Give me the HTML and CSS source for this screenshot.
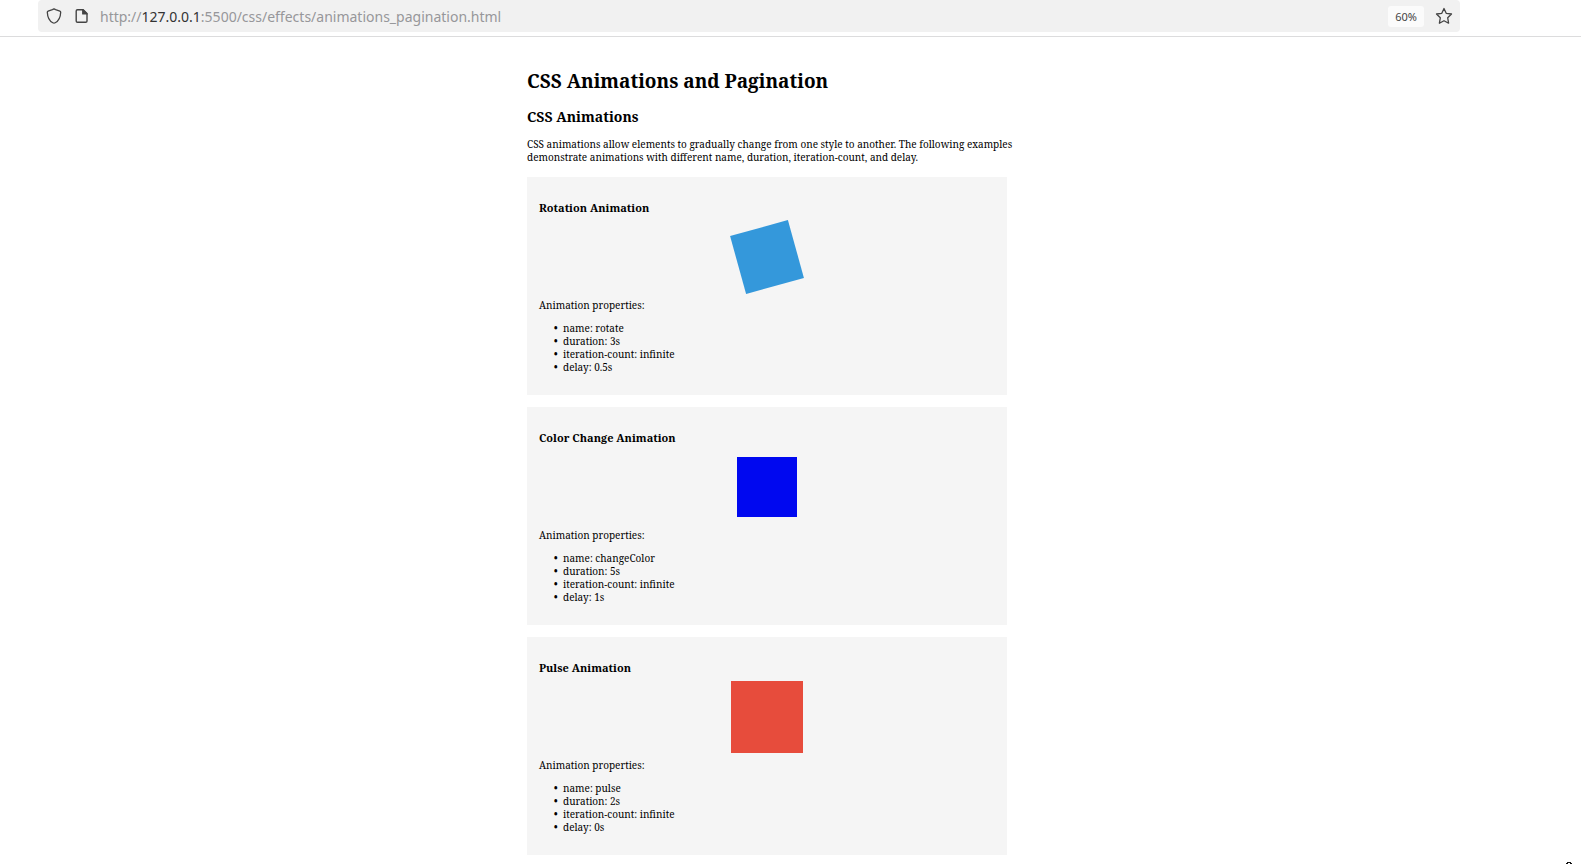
FILE: index.html
```
<!DOCTYPE html>
<html lang="en">
<head>
<meta charset="utf-8">
<title>CSS Animations and Pagination</title>
<link rel="stylesheet" href="styles.css">
</head>
<body>
<header class="toolbar">
  <div class="urlbar">
    <button class="icon-button" type="button" aria-label="Tracking protection">
      <svg width="16" height="16" viewBox="0 0 16 16" fill="none" stroke="currentColor" stroke-width="1.3" stroke-linejoin="round"><path d="M8 .8 9.6 1.6 13.9 3.1Q14.7 3.4 14.7 4.2C14.5 9 12.8 12.8 9.2 14.8Q8 15.5 6.8 14.8C3.2 12.8 1.5 9 1.3 4.2Q1.3 3.4 2.1 3.1L6.4 1.6Z"/></svg>
    </button>
    <button class="icon-button" type="button" aria-label="Site information">
      <svg width="16" height="16" viewBox="0 0 16 16" fill="none" stroke="currentColor" stroke-width="1.4" stroke-linejoin="round"><path d="M4.5 1.7H10.2L14 5.5V13Q14 14.3 12.7 14.3H4.5Q3.2 14.3 3.2 13V3Q3.2 1.7 4.5 1.7Z"/><path d="M9.8 1.7V5.9H14Z" fill="currentColor"/></svg>
    </button>
    <div class="address" role="textbox" aria-label="Address" contenteditable="true" spellcheck="false">http://<span class="host">127.0.0.1</span>:5500/css/effects/animations_pagination.html</div>
    <button class="zoom" type="button">60%</button>
    <button class="icon-button" type="button" aria-label="Bookmark this page">
      <svg width="18" height="18" viewBox="0 0 18 18" fill="none" stroke="currentColor" stroke-width="1.3" stroke-linejoin="round"><path d="M9 1.5 11.2 6.3 16.5 7 12.7 10.8 13.6 16.2 9 13.7 4.4 16.2 5.3 10.8 1.5 7 6.8 6.3Z"/></svg>
    </button>
  </div>
</header>
<main class="page">
  <div class="content">
    <h1>CSS Animations and Pagination</h1>
    <h2>CSS Animations</h2>
    <p class="intro">CSS animations allow elements to gradually change from one style to another. The following examples demonstrate animations with different name, duration, iteration-count, and delay.</p>
    <section class="card">
      <h3>Rotation Animation</h3>
      <div class="box box-rotate"></div>
      <p>Animation properties:</p>
      <ul>
        <li>name: rotate</li>
        <li>duration: 3s</li>
        <li>iteration-count: infinite</li>
        <li>delay: 0.5s</li>
      </ul>
    </section>
    <section class="card">
      <h3>Color Change Animation</h3>
      <div class="box box-color"></div>
      <p>Animation properties:</p>
      <ul>
        <li>name: changeColor</li>
        <li>duration: 5s</li>
        <li>iteration-count: infinite</li>
        <li>delay: 1s</li>
      </ul>
    </section>
    <section class="card">
      <h3>Pulse Animation</h3>
      <div class="box box-pulse"></div>
      <p>Animation properties:</p>
      <ul>
        <li>name: pulse</li>
        <li>duration: 2s</li>
        <li>iteration-count: infinite</li>
        <li>delay: 0s</li>
      </ul>
    </section>
  </div>
</main>
<svg class="pointer" width="6" height="3" viewBox="0 0 6 3"><path d="M1 1H5V2H6V3H4V2H2V3H0V2H1Z" fill="#111"/></svg>
</body>
</html>
```
FILE: styles.css
```
body {
  margin: 0;
  background: #fff;
  color: #000;
  font: 10px/13px "Noto Serif", "DejaVu Serif", serif;
}

.toolbar {
  padding: 0 121px 4px 38px;
  border-bottom: 1px solid #dcdcdd;
  font-family: "Noto Sans", sans-serif;
}

.urlbar {
  display: flex;
  align-items: center;
  gap: 11px;
  height: 32px;
  padding: 0 7px 0 8px;
  border-radius: 4px;
  background: #f1f1f1;
}

.icon-button {
  display: flex;
  padding: 0;
  border: 0;
  background: none;
  color: #444;
}

.address {
  flex: 1;
  padding-top: 2px;
  color: #97979a;
  font-size: 14px;
  line-height: 20px;
  white-space: nowrap;
}

.host {
  color: #333;
}

.zoom {
  height: 21px;
  padding: 0 7px;
  border: 0;
  border-radius: 3px;
  background: #fbfbfb;
  color: #444;
  font: 11px/21px "Noto Sans", sans-serif;
}

.page {
  padding: 31px 47px 9px 0;
}

.content {
  max-width: 480px;
  margin: 0 auto;
}

h1 {
  margin: 0 0 13px;
  font-size: 19px;
  line-height: 26px;
}

h2 {
  margin: 0 0 11px;
  font-size: 14px;
  line-height: 20px;
}

.intro {
  margin: 0 -12px 13px 0;
}

.card {
  margin-bottom: 12px;
  padding: 23px 12px 21px;
  background: #f5f5f5;
}

.card:last-child {
  margin-bottom: 0;
}

.card h3 {
  margin: 0;
  font-size: 11px;
  line-height: 15px;
}

.card p {
  margin: 0 0 10px;
}

.card ul {
  margin: 0;
  padding-left: 24px;
  list-style-type: "•  ";
}

.card li::marker {
  font-weight: bold;
}

.box {
  width: 60px;
  height: 60px;
  margin: 12px auto;
}

.box-rotate {
  background: #3498db;
  transform: rotate(-15.5deg);
}

.box-color {
  background: #0008f0;
}

.box-pulse {
  background: #e74c3c;
  transform: scale(1.2);
}

.pointer {
  position: fixed;
  right: 9px;
  bottom: 0;
}
```
